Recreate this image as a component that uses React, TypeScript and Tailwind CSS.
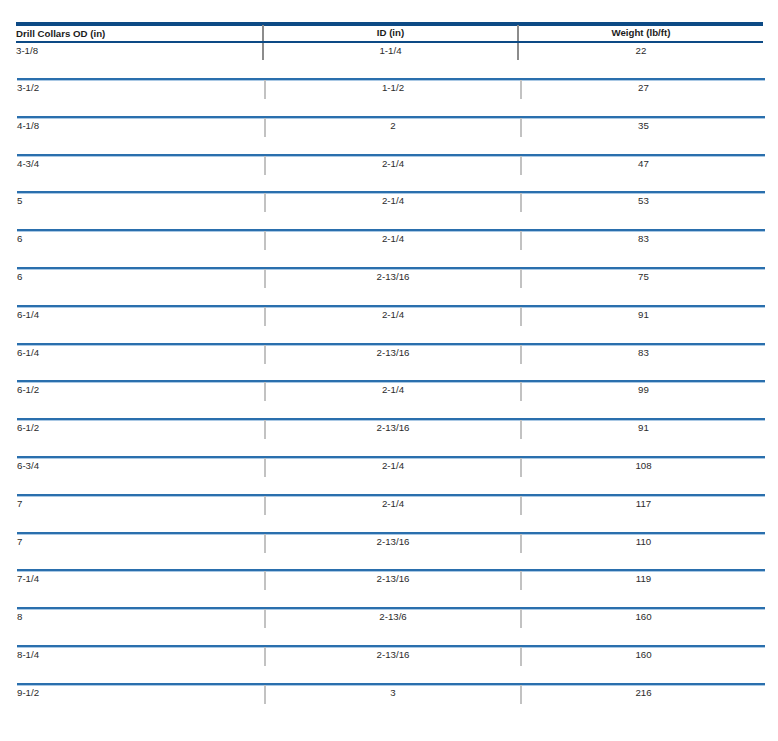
const rows: [string, string, string][] = [
  ["3-1/2", "1-1/2", "27"],
  ["4-1/8", "2", "35"],
  ["4-3/4", "2-1/4", "47"],
  ["5", "2-1/4", "53"],
  ["6", "2-1/4", "83"],
  ["6", "2-13/16", "75"],
  ["6-1/4", "2-1/4", "91"],
  ["6-1/4", "2-13/16", "83"],
  ["6-1/2", "2-1/4", "99"],
  ["6-1/2", "2-13/16", "91"],
  ["6-3/4", "2-1/4", "108"],
  ["7", "2-1/4", "117"],
  ["7", "2-13/16", "110"],
  ["7-1/4", "2-13/16", "119"],
  ["8", "2-13/6", "160"],
  ["8-1/4", "2-13/16", "160"],
  ["9-1/2", "3", "216"],
];

// centred cell with a short grey rule on its left edge
function Cell({ text, first }: { text: string; first?: boolean }) {
  return (
    <div className="flex items-start">
      <div
        className={
          first
            ? "w-[2px] h-[17px] shrink-0 bg-[#8c8c8c]"
            : "w-[2px] h-[19px] shrink-0 bg-[#c2c2c2]"
        }
      />
      <div className="flex-1 text-center pt-[2px]">{text}</div>
    </div>
  );
}

export default function App() {
  return (
    <div
      className="min-h-screen bg-white pt-[22px] pl-[16px] text-[9.7px] leading-[12px] text-[#2b2b2b]"
      style={{ fontFamily: '"Liberation Sans", Arial, sans-serif' }}
    >
      {/* header */}
      <div className="w-[747px] border-t-4 border-b-2 border-[#0d4a85] grid grid-cols-[246px_255px_246px] h-[21px] font-bold text-[#1c1c1c]">
        <div className="flex items-center">Drill Collars OD (in)</div>
        <div className="flex items-center justify-center border-l-2 border-[#8c8c8c] -mt-px">
          ID (in)
        </div>
        <div className="flex items-center justify-center border-l-2 border-[#8c8c8c] -mt-px">
          Weight (lb/ft)
        </div>
      </div>

      {/* first row sits right under the header rule */}
      <div className="w-[747px] h-[35px] grid grid-cols-[246px_255px_246px]">
        <div className="pt-[2px]">3-1/8</div>
        <Cell text="1-1/4" first />
        <Cell text="22" first />
      </div>

      {rows.map(([od, id, wt], i) => (
        <div
          key={i}
          className="ml-px w-[748px] h-[37.8px] border-t-2 border-[#2a6fad] shadow-[inset_0_1px_0_#a9c8e4] grid grid-cols-[247px_256px_245px]"
        >
          <div className="pt-[2px]">{od}</div>
          <Cell text={id} />
          <Cell text={wt} />
        </div>
      ))}
    </div>
  );
}
